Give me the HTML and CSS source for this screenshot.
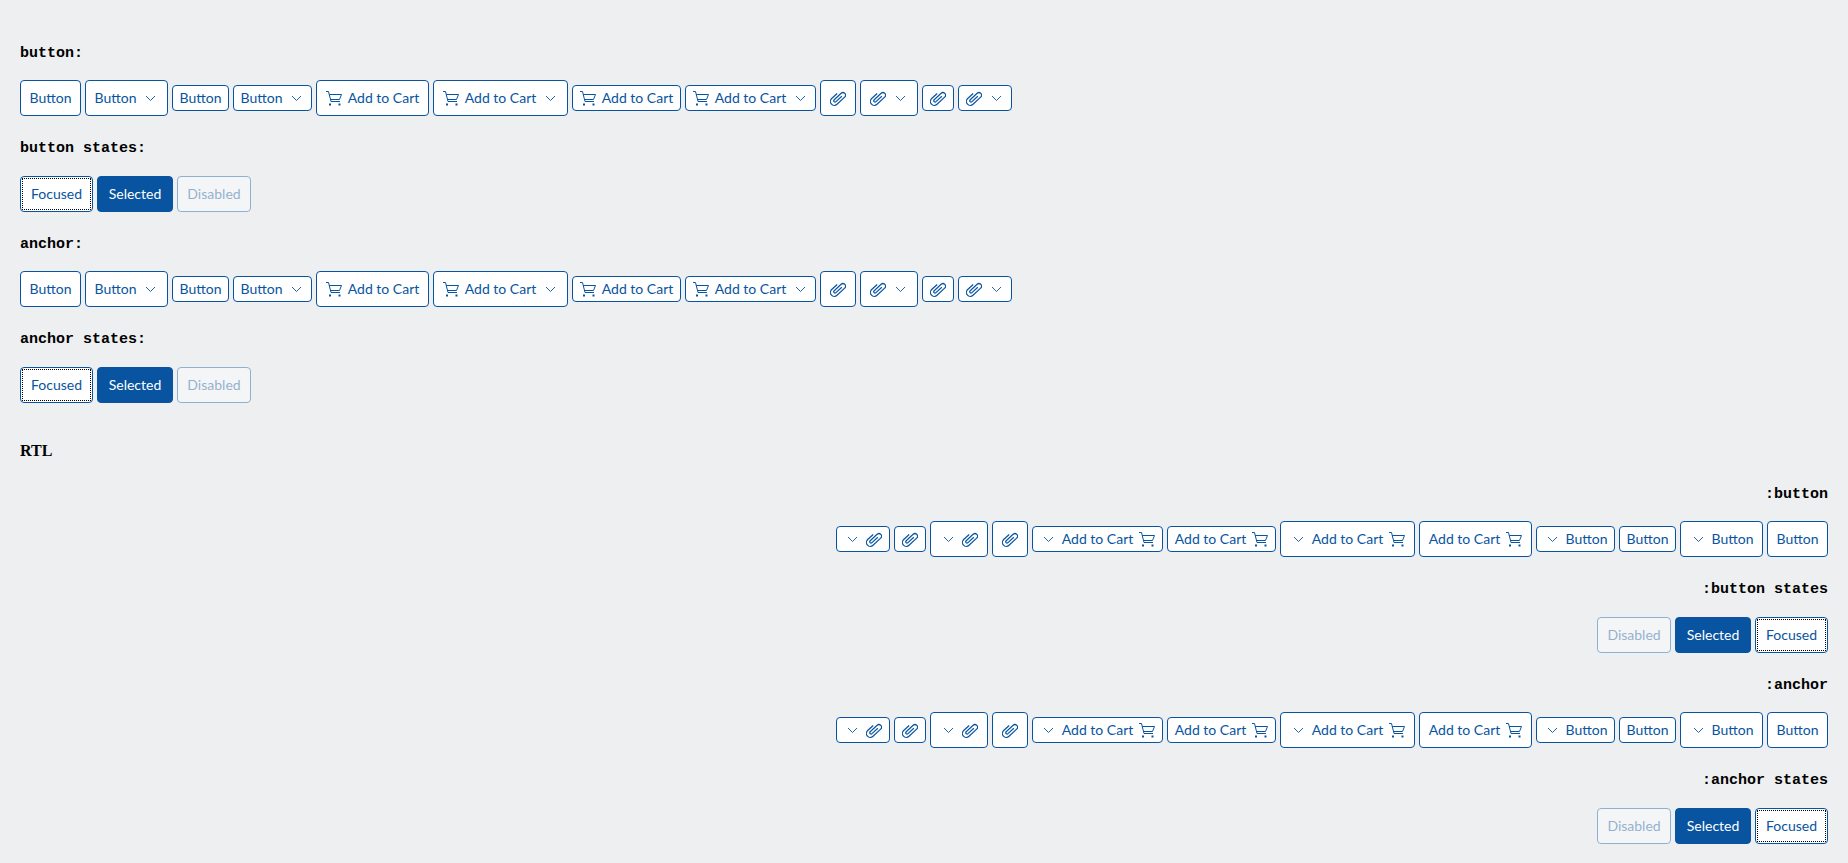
FILE: index.html
```
<!DOCTYPE html>
<html lang="en">
<head>
<meta charset="utf-8">
<title>Button and anchor variants</title>
<link rel="stylesheet" href="styles.css">
</head>
<body>
<svg class="sprite" aria-hidden="true">
  <symbol id="cart" viewBox="0 0 16 16">
    <path d="M0 1.500H2.500L5 11.500H14M3.200 4.500H15.500L13.500 9.500H4.500" fill="none" stroke="currentColor"/>
    <path d="M3 13.500h2v2H3zM12.500 13.500h2v2h-2z" fill="currentColor"/>
  </symbol>
  <symbol id="clip" viewBox="0 0 16 16">
    <path transform="translate(8 8) rotate(-43)" d="M4 1.300H-4A1.300 1.300 0 0 1-4-1.300H5.500A2.600 2.600 0 0 1 5.500 3.900H-5A3.900 3.900 0 0 1-5-3.900H2.500" fill="none" stroke="currentColor" stroke-width="1.200"/>
  </symbol>
  <symbol id="chevron" viewBox="0 0 16 16">
    <path d="M4 6L8.500 10.500L13 6" fill="none" stroke="currentColor" stroke-width=".9"/>
  </symbol>
</svg>
<main class="page">
  <section class="group" id="ltr"></section>
  <h4 class="title">RTL</h4>
  <section class="group" id="rtl" dir="rtl"></section>
</main>
<script src="buttons.js"></script>
</body>
</html>
```
FILE: styles.css
```
body {
  margin: 0;
  background: #edeff0;
  color: #000;
}
.sprite {
  position: absolute;
  width: 0;
  height: 0;
}
.page {
  padding: 21px 20px 19px;
}
.group {
  display: flex;
  flex-direction: column;
}
.heading {
  margin: 24px 0 18px;
  font: bold 15px/17px "Liberation Mono", monospace;
}
.heading-states {
  margin-bottom: 19px;
}
.title {
  margin: 39px 0 2px;
  font: bold 16px/18px "Liberation Serif", serif;
}
.row {
  display: flex;
  flex-wrap: wrap;
  align-items: center;
  gap: 4px;
}
.btn {
  position: relative;
  box-sizing: border-box;
  display: inline-flex;
  align-items: center;
  justify-content: center;
  gap: 6px;
  height: 36px;
  margin: 0;
  padding: 0 9px;
  border: 1px solid #0854a0;
  border-radius: 4px;
  background: #fff;
  color: #0854a0;
  font: 14px/20px Lato, sans-serif;
  text-decoration: none;
  white-space: nowrap;
  cursor: pointer;
}
.compact {
  height: 26px;
  padding: 0 7px;
}
.label {
  display: flex;
  justify-content: center;
}
.label-button {
  width: 41px;
}
.label-cart {
  width: 71px;
}
.label-focused {
  width: 53px;
}
.label-selected {
  width: 56px;
}
.label-disabled {
  width: 54px;
}
.icon {
  flex: none;
  width: 16px;
  height: 16px;
}
.focused::after {
  content: "";
  position: absolute;
  inset: 1px;
  border: 1px dotted #000;
}
.selected {
  background: #0854a0;
  color: #fff;
}
.disabled {
  opacity: .4;
  cursor: default;
}
```
FILE: buttons.js
```
const icon = name => `<svg class="icon" aria-hidden="true"><use href="#${name}"/></svg>`;

function control(tag, classes, content, extra = '') {
  return tag === 'button'
    ? `<button type="button" class="btn ${classes}" ${extra}>${content}</button>`
    : `<a href="#" class="btn ${classes}" ${extra}>${content}</a>`;
}

function variants(tag) {
  const kinds = [
    ['<span class="label label-button">Button</span>', ''],
    [icon('cart') + '<span class="label label-cart">Add to Cart</span>', ''],
    [icon('clip'), 'aria-label="Attach"']
  ];
  return kinds.map(([content, extra]) =>
    ['', 'compact'].map(size =>
      control(tag, size, content, extra) +
      control(tag, size + ' menu', content + icon('chevron'), extra + ' aria-haspopup="true"')
    ).join('')
  ).join('');
}

function states(tag) {
  return ['Focused', 'Selected', 'Disabled'].map(name => {
    const key = name.toLowerCase();
    const off = key !== 'disabled' ? '' : tag === 'button' ? 'disabled' : 'aria-disabled="true"';
    return control(tag, key, `<span class="label label-${key}">${name}</span>`, off);
  }).join('');
}

for (const id of ['ltr', 'rtl']) {
  document.getElementById(id).innerHTML = ['button', 'a'].map(tag => {
    const name = tag === 'a' ? 'anchor' : 'button';
    return `<h4 class="heading">${name}:</h4><div class="row">${variants(tag)}</div>
      <h4 class="heading heading-states">${name} states:</h4><div class="row">${states(tag)}</div>`;
  }).join('');
}
```
